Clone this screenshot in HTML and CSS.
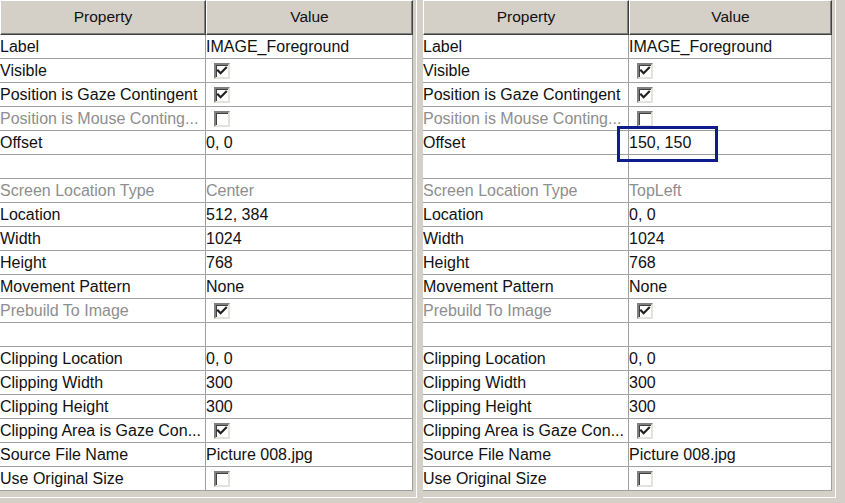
FILE: index.html
```html
<!DOCTYPE html>
<html>
<head>
<meta charset="utf-8">
<title>Property Grids</title>
<link rel="stylesheet" href="styles.css">
</head>
<body>
<div class="screen">
  <section class="panel">
    <div class="grid">
      <div class="head"><div class="hcell prop">Property</div><div class="hcell val">Value</div></div>
      <div class="row"><div class="k">Label</div><div class="v">IMAGE_Foreground</div></div>
      <div class="row"><div class="k">Visible</div><div class="v"><span class="cb"><svg viewBox="0 0 12 12"><path d="M2 5.5 4.6 8.2 10 2.8"/></svg></span></div></div>
      <div class="row"><div class="k">Position is Gaze Contingent</div><div class="v"><span class="cb"><svg viewBox="0 0 12 12"><path d="M2 5.5 4.6 8.2 10 2.8"/></svg></span></div></div>
      <div class="row"><div class="k dis">Position is Mouse Conting...</div><div class="v"><span class="cb"></span></div></div>
      <div class="row"><div class="k">Offset</div><div class="v">0, 0</div></div>
      <div class="row"><div class="k"></div><div class="v"></div></div>
      <div class="row"><div class="k dis">Screen Location Type</div><div class="v dis">Center</div></div>
      <div class="row"><div class="k">Location</div><div class="v">512, 384</div></div>
      <div class="row"><div class="k">Width</div><div class="v">1024</div></div>
      <div class="row"><div class="k">Height</div><div class="v">768</div></div>
      <div class="row"><div class="k">Movement Pattern</div><div class="v">None</div></div>
      <div class="row"><div class="k dis">Prebuild To Image</div><div class="v"><span class="cb"><svg viewBox="0 0 12 12"><path d="M2 5.5 4.6 8.2 10 2.8"/></svg></span></div></div>
      <div class="row"><div class="k"></div><div class="v"></div></div>
      <div class="row"><div class="k">Clipping Location</div><div class="v">0, 0</div></div>
      <div class="row"><div class="k">Clipping Width</div><div class="v">300</div></div>
      <div class="row"><div class="k">Clipping Height</div><div class="v">300</div></div>
      <div class="row"><div class="k">Clipping Area is Gaze Con...</div><div class="v"><span class="cb"><svg viewBox="0 0 12 12"><path d="M2 5.5 4.6 8.2 10 2.8"/></svg></span></div></div>
      <div class="row"><div class="k">Source File Name</div><div class="v">Picture 008.jpg</div></div>
      <div class="row"><div class="k">Use Original Size</div><div class="v"><span class="cb"></span></div></div>
    </div>
  </section>
  <section class="panel right">
    <div class="grid">
      <div class="head"><div class="hcell prop">Property</div><div class="hcell val">Value</div></div>
      <div class="row"><div class="k">Label</div><div class="v">IMAGE_Foreground</div></div>
      <div class="row"><div class="k">Visible</div><div class="v"><span class="cb"><svg viewBox="0 0 12 12"><path d="M2 5.5 4.6 8.2 10 2.8"/></svg></span></div></div>
      <div class="row"><div class="k">Position is Gaze Contingent</div><div class="v"><span class="cb"><svg viewBox="0 0 12 12"><path d="M2 5.5 4.6 8.2 10 2.8"/></svg></span></div></div>
      <div class="row"><div class="k dis">Position is Mouse Conting...</div><div class="v"><span class="cb"></span></div></div>
      <div class="row"><div class="k">Offset</div><div class="v">150, 150</div></div>
      <div class="row"><div class="k"></div><div class="v"></div></div>
      <div class="row"><div class="k dis">Screen Location Type</div><div class="v dis">TopLeft</div></div>
      <div class="row"><div class="k">Location</div><div class="v">0, 0</div></div>
      <div class="row"><div class="k">Width</div><div class="v">1024</div></div>
      <div class="row"><div class="k">Height</div><div class="v">768</div></div>
      <div class="row"><div class="k">Movement Pattern</div><div class="v">None</div></div>
      <div class="row"><div class="k dis">Prebuild To Image</div><div class="v"><span class="cb"><svg viewBox="0 0 12 12"><path d="M2 5.5 4.6 8.2 10 2.8"/></svg></span></div></div>
      <div class="row"><div class="k"></div><div class="v"></div></div>
      <div class="row"><div class="k">Clipping Location</div><div class="v">0, 0</div></div>
      <div class="row"><div class="k">Clipping Width</div><div class="v">300</div></div>
      <div class="row"><div class="k">Clipping Height</div><div class="v">300</div></div>
      <div class="row"><div class="k">Clipping Area is Gaze Con...</div><div class="v"><span class="cb"><svg viewBox="0 0 12 12"><path d="M2 5.5 4.6 8.2 10 2.8"/></svg></span></div></div>
      <div class="row"><div class="k">Source File Name</div><div class="v">Picture 008.jpg</div></div>
      <div class="row"><div class="k">Use Original Size</div><div class="v"><span class="cb"></span></div></div>
    </div>
    <div class="mark"></div>
  </section>
</div>
</body>
</html>
```

FILE: styles.css
```css
* { box-sizing: border-box; }
html, body { margin: 0; height: 100%; }
body {
  background: #d4d0c8;
  font-family: "Liberation Sans", Arial, sans-serif;
  font-size: 16px;
  color: #111;
  overflow: hidden;
}
.screen {
  display: flex;
  gap: 6px;
  align-items: flex-start;
}
.panel {
  position: relative;
  padding: 0 3px 6px 0;
  border-right: 1px solid #fff;
  border-bottom: 1px solid #fff;
}
.grid { width: 413px; }
.panel.right .grid { width: 409px; }

.head { display: flex; height: 35px; }
.hcell {
  display: flex;
  align-items: center;
  justify-content: center;
  background: #d4d0c8;
  border-top: 1px solid #fff;
  border-left: 1px solid #fff;
  border-right: 1px solid #404040;
  border-bottom: 1px solid #404040;
  box-shadow: inset -1px -1px 0 #808080;
  padding-bottom: 2px;
  font-size: 15.5px;
}
.hcell.prop { width: 206px; }
.hcell.val { flex: 1; }

.row {
  display: flex;
  height: 24px;
  line-height: 23px;
  background: #fff;
  border-bottom: 1px solid #a0a0a0;
  border-right: 1px solid #a0a0a0;
}
.k {
  width: 206px;
  flex: none;
  border-right: 1px solid #a0a0a0;
  white-space: nowrap;
  overflow: hidden;
}
.v {
  flex: 1;
  display: flex;
  align-items: center;
  white-space: nowrap;
  overflow: hidden;
}
.dis { color: #8e8e8e; }

.cb {
  display: block;
  width: 16px;
  height: 16px;
  margin-left: 8px;
  border: 2px solid;
  border-color: #808080 #e4e2dc #e4e2dc #808080;
  box-shadow: inset 1px 1px 0 #404040;
  background: #fff;
}
.cb svg {
  display: block;
  width: 12px;
  height: 12px;
}
.cb path {
  fill: none;
  stroke: #222;
  stroke-width: 2.2;
  stroke-linecap: square;
}

.mark {
  position: absolute;
  left: 194px;
  top: 126px;
  width: 101px;
  height: 36px;
  border: 3px solid #0e1c8c;
}
```
